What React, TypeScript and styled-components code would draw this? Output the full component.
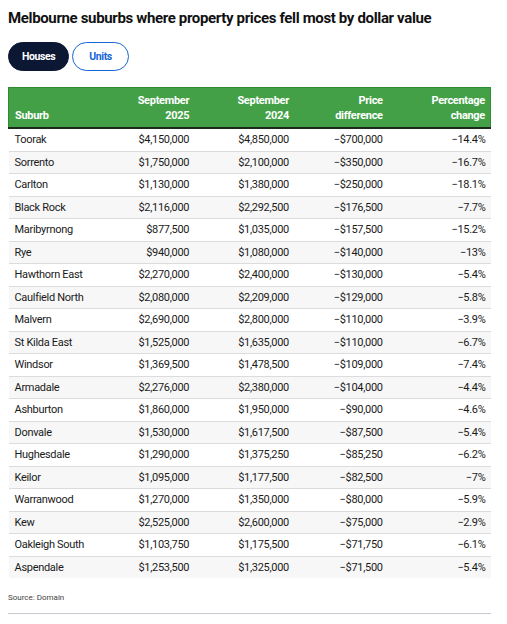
import React, { useState } from "react";
import styled, { createGlobalStyle } from "styled-components";

const Global = createGlobalStyle`
  body { margin: 0; background: #fff; font-family: Roboto, "Noto Sans", sans-serif; color: #1a1a1a; }
`;

const Page = styled.div`
  padding: 7px 16px 0 8px;
  width: 483px;
`;

const Title = styled.h1`
  margin: 0;
  font-size: 15px;
  font-weight: 700;
  line-height: 22px;
  letter-spacing: -0.35px;
  color: #111;
  white-space: nowrap;
`;

const Tabs = styled.div`
  display: flex;
  gap: 3px;
  margin-top: 13px;
`;

const Tab = styled.button<{ $active?: boolean }>`
  height: 29px;
  padding: 0 ${(p) => (p.$active ? "13px" : "16px")};
  border-radius: 15px;
  border: 1.5px solid ${(p) => (p.$active ? "#0c1733" : "#1466d6")};
  background: ${(p) => (p.$active ? "#0c1733" : "#fff")};
  color: ${(p) => (p.$active ? "#fff" : "#1466d6")};
  font-family: inherit;
  font-size: 10.5px;
  font-weight: 700;
  letter-spacing: -0.4px;
  cursor: pointer;
`;

const Table = styled.table`
  margin-top: 16px;
  width: 483px;
  border-collapse: collapse;
  font-size: 11px;
`;

const Th = styled.th<{ $left?: boolean }>`
  background: #43a047;
  color: #fff;
  font-weight: 700;
  font-size: 11px;
  line-height: 15px;
  letter-spacing: -0.3px;
  text-align: ${(p) => (p.$left ? "left" : "right")};
  vertical-align: bottom;
  padding: 4px 5px 4px 6px;
  height: 31px;
  border-top: 1px solid #2f8a34;
  border-bottom: 2px solid #1c2a1c;
  &:first-child { border-left: 1px solid #2f8a34; }
  &:last-child { border-right: 1px solid #2f8a34; }
`;

const Tr = styled.tr`
  &:nth-child(even) { background: #f7f7f7; }
  & + & { border-top: 1px solid #dcdcdc; }
`;

const Td = styled.td<{ $left?: boolean }>`
  height: 21.5px;
  padding: 0 5px 0 6px;
  text-align: ${(p) => (p.$left ? "left" : "right")};
  font-size: 11px;
  letter-spacing: -0.3px;
  color: #1a1a1a;
  white-space: nowrap;
`;

const Source = styled.div`
  margin-top: 14px;
  font-size: 8px;
  line-height: 11px;
  color: #444;
`;

const Rule = styled.hr`
  margin: 10px 0 0;
  border: none;
  border-top: 1px solid #c8c8d2;
  width: 483px;
`;

const rows: [string, string, string, string, string][] = [
  ["Toorak", "$4,150,000", "$4,850,000", "−$700,000", "−14.4%"],
  ["Sorrento", "$1,750,000", "$2,100,000", "−$350,000", "−16.7%"],
  ["Carlton", "$1,130,000", "$1,380,000", "−$250,000", "−18.1%"],
  ["Black Rock", "$2,116,000", "$2,292,500", "−$176,500", "−7.7%"],
  ["Maribyrnong", "$877,500", "$1,035,000", "−$157,500", "−15.2%"],
  ["Rye", "$940,000", "$1,080,000", "−$140,000", "−13%"],
  ["Hawthorn East", "$2,270,000", "$2,400,000", "−$130,000", "−5.4%"],
  ["Caulfield North", "$2,080,000", "$2,209,000", "−$129,000", "−5.8%"],
  ["Malvern", "$2,690,000", "$2,800,000", "−$110,000", "−3.9%"],
  ["St Kilda East", "$1,525,000", "$1,635,000", "−$110,000", "−6.7%"],
  ["Windsor", "$1,369,500", "$1,478,500", "−$109,000", "−7.4%"],
  ["Armadale", "$2,276,000", "$2,380,000", "−$104,000", "−4.4%"],
  ["Ashburton", "$1,860,000", "$1,950,000", "−$90,000", "−4.6%"],
  ["Donvale", "$1,530,000", "$1,617,500", "−$87,500", "−5.4%"],
  ["Hughesdale", "$1,290,000", "$1,375,250", "−$85,250", "−6.2%"],
  ["Keilor", "$1,095,000", "$1,177,500", "−$82,500", "−7%"],
  ["Warranwood", "$1,270,000", "$1,350,000", "−$80,000", "−5.9%"],
  ["Kew", "$2,525,000", "$2,600,000", "−$75,000", "−2.9%"],
  ["Oakleigh South", "$1,103,750", "$1,175,500", "−$71,750", "−6.1%"],
  ["Aspendale", "$1,253,500", "$1,325,000", "−$71,500", "−5.4%"],
];

const widths = [86, 100, 100, 94, 103];

export default function App() {
  const [tab, setTab] = useState("houses");
  return (
    <Page>
      <Global />
      <Title>Melbourne suburbs where property prices fell most by dollar value</Title>
      <Tabs>
        <Tab $active={tab === "houses"} onClick={() => setTab("houses")}>Houses</Tab>
        <Tab $active={tab === "units"} onClick={() => setTab("units")}>Units</Tab>
      </Tabs>
      <Table>
        <colgroup>
          {widths.map((w, i) => (
            <col key={i} style={{ width: w }} />
          ))}
        </colgroup>
        <thead>
          <tr>
            <Th $left>Suburb</Th>
            <Th>September<br />2025</Th>
            <Th>September<br />2024</Th>
            <Th>Price<br />difference</Th>
            <Th>Percentage<br />change</Th>
          </tr>
        </thead>
        <tbody>
          {rows.map((r) => (
            <Tr key={r[0]}>
              <Td $left>{r[0]}</Td>
              <Td>{r[1]}</Td>
              <Td>{r[2]}</Td>
              <Td>{r[3]}</Td>
              <Td>{r[4]}</Td>
            </Tr>
          ))}
        </tbody>
      </Table>
      <Source>Source: Domain</Source>
      <Rule />
    </Page>
  );
}
